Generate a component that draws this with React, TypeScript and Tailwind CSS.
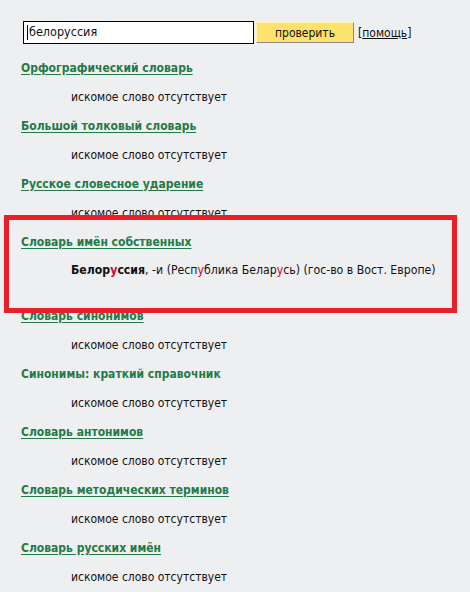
import React from 'react';

type Entry = { title: string; underline?: boolean; body?: React.ReactNode; tall?: boolean };

const missing = 'искомое слово отсутствует';

const entries: Entry[] = [
  { title: 'Орфографический словарь', underline: true },
  { title: 'Большой толковый словарь', underline: true },
  { title: 'Русское словесное ударение', underline: true },
  {
    title: 'Словарь имён собственных',
    underline: true,
    tall: true,
    body: (
      <>
        <b>
          Белор<span className="text-[#d4002a]">у</span>ссия
        </b>
        , -и (Респ<span className="text-[#d4002a]">у</span>блика Белар
        <span className="text-[#d4002a]">у</span>сь) (гос-во в Вост. Европе)
      </>
    ),
  },
  { title: 'Словарь синонимов', underline: true },
  { title: 'Синонимы: краткий справочник', underline: false },
  { title: 'Словарь антонимов', underline: true },
  { title: 'Словарь методических терминов', underline: true },
  { title: 'Словарь русских имён', underline: true },
];

export default function App() {
  return (
    <div
      className="relative w-[470px] h-[592px] overflow-hidden bg-[#eeeff1] text-[12px] text-[#111]"
      style={{ fontFamily: '"DejaVu Sans Condensed", "DejaVu Sans", sans-serif' }}
    >
      {/* search form */}
      <div className="flex items-center pt-[21px] pl-[23px] h-[44px]">
        <div className="w-[231px] h-[23px] border border-black bg-white flex items-center pl-[3px]">
          <span className="w-px h-[15px] bg-black mr-px" />
          <span className="text-[12.5px]">белоруссия</span>
        </div>
        <button className="ml-[2px] w-[98px] h-[21px] bg-[#fde36e] border border-t-[#fff3b8] border-l-[#fff3b8] border-b-[#8a8a8a] border-r-[#8a8a8a] flex items-center justify-center text-[#111] text-[12px]">
          проверить
        </button>
        <span className="ml-[4px] text-[12px]">
          [<span className="underline">помощь</span>]
        </span>
      </div>

      {/* results */}
      <div className="pt-[9px] pl-[21px]">
        {entries.map((e) => (
          <div key={e.title} className={e.tall ? 'pb-[16px]' : ''}>
            <div className="h-[29px] flex items-center">
              <span className={`font-bold text-[#237a46] ${e.underline ? 'underline underline-offset-2' : ''}`}>
                {e.title}
              </span>
            </div>
            <div className={`h-[29px] flex items-center pl-[50px] ${e.body ? 'text-[12.2px]' : ''}`}>{e.body ?? missing}</div>
          </div>
        ))}
      </div>

      {/* annotation box */}
      <div className="absolute left-[4px] top-[215px] w-[453px] h-[98px] border-[5px] border-[#e8202a]" />
    </div>
  );
}
